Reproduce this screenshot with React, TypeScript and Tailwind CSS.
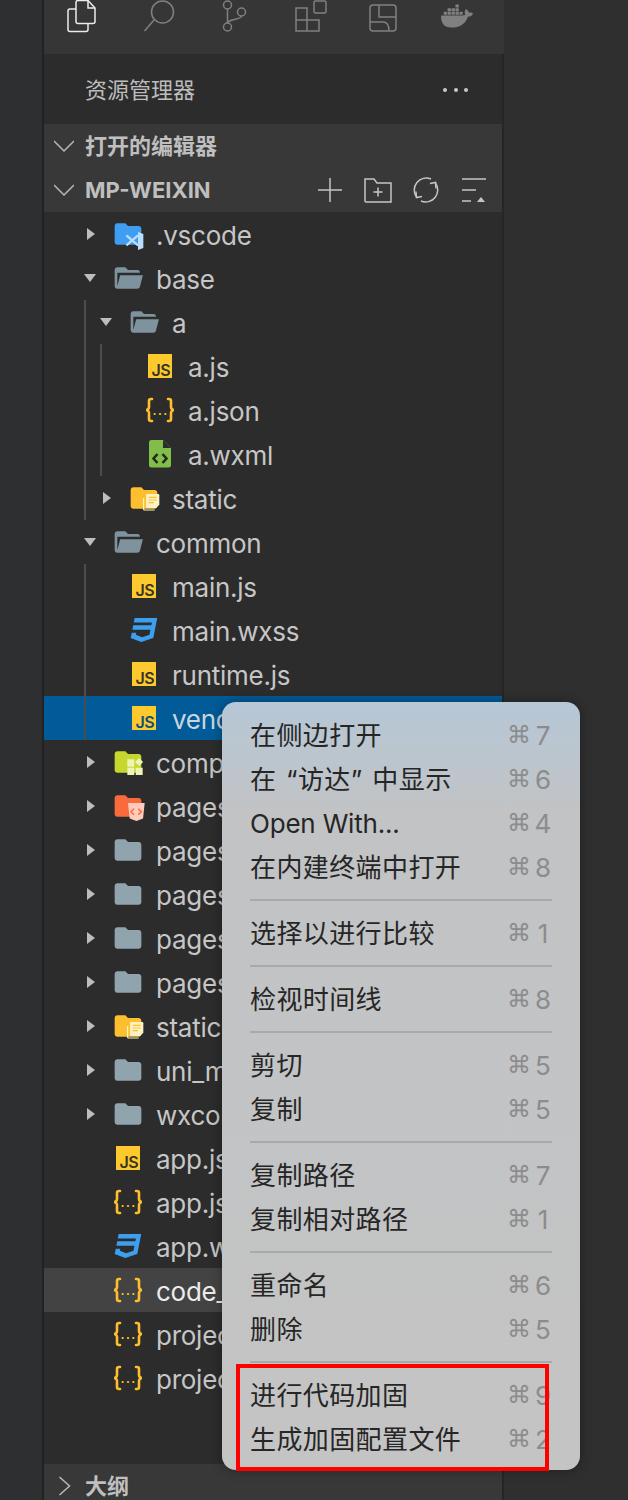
import React from 'react';
import { SiDocker } from 'react-icons/si';

const sans = 'font-["Inter","Noto_Sans_CJK_SC",sans-serif]';

const Folder = ({ color, children }: { color: string; children?: React.ReactNode }) => (
  <svg viewBox="0 0 24 24" className="h-8 w-8 overflow-visible" fill={color}>
    <path d="M10 4H4c-1.1 0-2 .9-2 2v12c0 1.1.9 2 2 2h16c1.1 0 2-.9 2-2V8c0-1.1-.9-2-2-2h-8l-2-2z" />
    {children}
  </svg>
);

const FolderOpen = () => (
  <svg viewBox="0 0 24 24" className="h-8 w-8" fill="#7f939f">
    <path d="M19 20H4c-1.11 0-2-.9-2-2V6c0-1.11.89-2 2-2h6l2 2h7a2 2 0 0 1 2 2H4v10l2.14-8h17.07l-2.28 8.5c-.23.87-1.01 1.5-1.93 1.5z" />
  </svg>
);

const JsIcon = ({ dark = '#3a3426' }: { dark?: string }) => (
  <div
    className={`flex h-6 w-6 items-end justify-end bg-[#fdca2d] pr-[2px] text-[16px] leading-[15px] font-semibold tracking-[-0.6px] ${sans}`}
    style={{ color: dark }}
  >
    JS
  </div>
);

const JsonIcon = () => (
  <svg viewBox="0 0 32 32" className="h-8 w-8" fill="none" stroke="#fdbf2d" strokeWidth="2.600" strokeLinecap="round">
    <path d="M8 5H7a2 2 0 0 0-2 2V13a3 3 0 0 1-3 3 3 3 0 0 1 3 3v6a2 2 0 0 0 2 2h1" />
    <path d="M24 5h1a2 2 0 0 1 2 2V13a3 3 0 0 0 3 3 3 3 0 0 0-3 3v6a2 2 0 0 1-2 2h-1" />
    <path d="M10.500 20h.3M15.900 20h.3M21.200 20h.3" strokeWidth="2" />
  </svg>
);

const CssIcon = () => (
  <svg viewBox="0 0 24 24" className="h-8 w-8" fill="#3d9ff0">
    <path d="M5 3l-.65 3.34h13.59L17.500 8.500H3.920l-.66 3.330h13.590l-.76 3.810-5.480 1.810-4.750-1.810.33-1.640H2.850l-.79 4 7.850 3 9.050-3 1.200-6.030.24-1.210L21.940 3H5z" />
  </svg>
);

const WxmlIcon = () => (
  <svg viewBox="0 0 32 32" className="h-8 w-8">
    <path d="M7.500 2H19l8 8v17a2.500 2.500 0 0 1-2.500 2.500h-17A2.500 2.500 0 0 1 5 27V4.500A2.500 2.500 0 0 1 7.500 2z" fill="#82bd4a" />
    <path d="M19 2l8 8h-8z" fill="#2c2c2c" />
    <path d="M13.500 16l-4 4.500 4 4.500M18.500 16l4 4.500-4 4.500" fill="none" stroke="#1f2a16" strokeWidth="2.500" />
  </svg>
);

const VscodeFolder = () => (
  <Folder color="#3f9df2">
    <path d="M19.500 10.500l4 1.500v10.500l-4 1.500z" fill="#bbdefb" />
    <path d="M10.800 13l8.700 7.500M10.800 20.500l8.700-7.500" fill="none" stroke="#bbdefb" strokeWidth="1.700" />
  </Folder>
);

const ComponentsFolder = () => (
  <Folder color="#c6d82e">
    <path d="M11.500 10h5.200v5.500h-5.200zM11.500 16.300h5.200v5.500h-5.200zM17.800 16.300H23v5.500h-5.200zM20.300 9l3 3-3 3-3-3z" fill="#eef3b8" />
  </Folder>
);

const HtmlFolder = () => (
  <Folder color="#fb6a3d">
    <path d="M12 9.800h12.500l-1.200 11.500-5 1.900-5-1.900z" fill="#ffccbc" />
    <path d="M16.500 14l-2.300 2.300 2.300 2.300M19.700 14l2.300 2.300-2.300 2.300" fill="none" stroke="#fb6a3d" strokeWidth="1.100" />
  </Folder>
);

const StaticFolder = () => (
  <Folder color="#fdbf2d">
    <path d="M14.500 9h8a1 1 0 0 1 1 1v7l-2.500 2.500h-6.500a1 1 0 0 1-1-1V10a1 1 0 0 1 1-1z" fill="#fff3c4" />
    <path d="M15.500 11.500h6M15.500 13.500h6M15.500 15.500h4" stroke="#fdbf2d" strokeWidth="0.900" />
    <path d="M11.700 12v8.200a.8.800 0 0 0 .8.800H20" fill="none" stroke="#fff3c4" strokeWidth="0.900" />
  </Folder>
);

const Twistie = ({ open }: { open: boolean }) => (
  <svg viewBox="0 0 12 12" className="h-3 w-3 shrink-0 overflow-visible" fill="#bdbdbd">
    {open ? <path d="M0 2h12L6 10z" /> : <path d="M3 0l8 6-8 6z" />}
  </svg>
);

type RowProps = {
  depth?: number;
  twistie?: 'open' | 'closed';
  icon: React.ReactNode;
  label: string;
  state?: 'selected' | 'hover';
};

const Row = ({ depth = 0, twistie, icon, label, state }: RowProps) => {
  const pad = ['pl-[40px]', 'pl-[56px]', 'pl-[72px]'][depth];
  const tone =
    state === 'selected'
      ? 'bg-[#005b98] text-[#c9d6df]'
      : state === 'hover'
        ? 'bg-[#434343] text-[#ececec]'
        : 'text-[#c6c6c6]';
  return (
    <div className={`flex h-11 items-center whitespace-nowrap text-[26px] tracking-[-0.25px] ${pad} ${tone}`}>
      <div className="flex w-7 shrink-0 items-center">{twistie && <Twistie open={twistie === 'open'} />}</div>
      <div className="flex w-8 shrink-0 items-center justify-center">{icon}</div>
      <span className="ml-3 max-w-[280px] overflow-hidden pt-[2px]">{label}</span>
    </div>
  );
};

const Guide = ({ depth = 0, children }: { depth?: number; children: React.ReactNode }) => (
  <div className="relative">
    {children}
    <div className={`absolute top-0 bottom-0 w-[2px] bg-[#4c4c4c] ${depth === 0 ? 'left-[40px]' : 'left-[56px]'}`} />
  </div>
);

const Chevron = ({ right }: { right?: boolean }) => (
  <svg viewBox="0 0 20 20" className="h-5 w-5 shrink-0" fill="none" stroke="#b8b8b8" strokeWidth="1.500">
    {right ? <path d="M3.500 1l10 9-10 9" /> : <path d="M0 5l10 10L20 5" />}
  </svg>
);

const SectionHeader = ({ label, children }: { label: string; children?: React.ReactNode }) => (
  <div className="flex h-11 shrink-0 items-center bg-[#383838] pr-[14px] pl-[10px] text-[22px] font-bold text-[#bfbfbf]">
    <Chevron />
    <span className="ml-[11px]">{label}</span>
    {children}
  </div>
);

const HeaderActions = () => (
  <div className="ml-auto flex items-center gap-5">
    <svg viewBox="0 0 28 28" className="h-7 w-7" fill="none" stroke="#c5c5c5" strokeWidth="1.500">
      <path d="M14 2v24M2 14h24" />
    </svg>
    <svg viewBox="0 0 28 28" className="h-7 w-7" fill="none" stroke="#c5c5c5" strokeWidth="1.500">
      <path d="M1 3h9l3 4h14v19H2a1 1 0 0 1-1-1z" />
      <path d="M14 11.500v9M9.500 16h9" />
    </svg>
    <svg viewBox="0 0 28 28" className="h-7 w-7" fill="none" stroke="#c5c5c5" strokeWidth="1.500">
      <path d="M4.500 21A12 12 0 0 1 19 3M23.500 7A12 12 0 0 1 9 25" />
      <path d="M4 15.500l.5 6 5.500-1M24 12.500l-.5-6-5.500 1" />
    </svg>
    <svg viewBox="0 0 28 28" className="h-7 w-7" fill="#c5c5c5" stroke="#c5c5c5">
      <path d="M2 3h24M2 14h14M2 25h9" fill="none" strokeWidth="1.500" />
      <path d="M21 21l4 5h-8z" stroke="none" />
    </svg>
  </div>
);

const ActivityBar = () => (
  <div className="flex h-[54px] shrink-0 bg-[#363636] text-[#808080]">
    <div className="flex h-9 w-[75px] justify-center">
      <svg viewBox="0 0 36 36" className="h-9 w-9" fill="none" stroke="#ececec" strokeWidth="1.500">
        <path d="M14 0.500H24L31 8V21.500a2 2 0 0 1-2 2H14a2 2 0 0 1-2-2V2.500a2 2 0 0 1 2-2z" />
        <path d="M24 0.500V8H31" />
        <path d="M12 9H6a2 2 0 0 0-2 2V29.500a2 2 0 0 0 2 2H22a2 2 0 0 0 2-2V23.500" />
      </svg>
    </div>
    <div className="flex h-9 w-[75px] justify-center">
      <svg viewBox="0 0 36 36" className="h-9 w-9 overflow-visible" fill="none" stroke="currentColor" strokeWidth="1.500">
        <circle cx="23.500" cy="12" r="11" />
        <path d="M15 20L5.500 31" />
      </svg>
    </div>
    <div className="flex h-9 w-[75px] justify-center">
      <svg viewBox="0 0 36 36" className="h-9 w-9 overflow-visible" fill="none" stroke="currentColor" strokeWidth="1.500">
        <circle cx="13.500" cy="5" r="4" />
        <circle cx="13.500" cy="27" r="4" />
        <circle cx="27.500" cy="12" r="4" />
        <path d="M13.500 9v14M27.500 16c0 4-14 3-14 7" />
      </svg>
    </div>
    <div className="flex h-9 w-[75px] justify-center">
      <svg viewBox="0 0 36 36" className="h-9 w-9 overflow-visible" fill="none" stroke="currentColor" strokeWidth="1.500">
        <rect x="25" y="1" width="12" height="12" rx="1.500" />
        <path d="M7 8h11v12h12v11H7zM7 20h11M18 20v11" />
      </svg>
    </div>
    <div className="flex h-9 w-[75px] justify-center">
      <svg viewBox="0 0 36 36" className="h-9 w-9 overflow-visible" fill="none" stroke="currentColor" strokeWidth="1.500">
        <rect x="6" y="5" width="26" height="26" rx="3" />
        <path d="M15 5v12h17M6 22h13c4 0 6 3 6 9" />
      </svg>
    </div>
    <div className="flex h-[32px] w-[75px] items-center justify-center">
      <SiDocker className="h-8 w-8" />
    </div>
  </div>
);

type MenuEntry = [string, string];

const menuGroups: MenuEntry[][] = [
  [
    ['在侧边打开', '7'],
    ['在 “访达” 中显示', '6'],
    ['Open With...', '4'],
    ['在内建终端中打开', '8'],
  ],
  [['选择以进行比较', '1']],
  [['检视时间线', '8']],
  [
    ['剪切', '5'],
    ['复制', '5'],
  ],
  [
    ['复制路径', '7'],
    ['复制相对路径', '1'],
  ],
  [
    ['重命名', '6'],
    ['删除', '5'],
  ],
  [
    ['进行代码加固', '9'],
    ['生成加固配置文件', '2'],
  ],
];

const ContextMenu = () => (
  <div className="absolute top-[702px] left-[222px] w-[358px] rounded-[14px] bg-linear-to-b from-[#b6c7d6] via-[#c1c3c5] via-[14%] to-[#c4c4c4] px-7 pt-[11px] pb-[9px] text-[26px] text-[#262626] shadow-[0_0_12px_rgba(0,0,0,0.35)]">
    {menuGroups.map((group, i) => (
      <div key={i}>
        {i > 0 && (
          <div className="flex h-[22px] items-center">
            <div className="h-[2px] w-full bg-[#a9a9a9]" />
          </div>
        )}
        {group.map(([label, key]) => (
          <div key={label} className="flex h-11 items-center justify-between whitespace-nowrap">
            <span className={label === 'Open With...' ? 'tracking-[-0.2px]' : 'tracking-[0.4px] [word-spacing:2px]'}>
              {label}
            </span>
            <span className="flex items-center gap-[3px] text-[#8c8c8c]">
              <span className='font-["DejaVu_Sans"] text-[24px]'>⌘</span>
              <span className="w-[18px] text-center">{key}</span>
            </span>
          </div>
        ))}
      </div>
    ))}
  </div>
);

const App: React.FC = () => {
  return (
    <div className={`relative flex h-[1500px] w-[628px] overflow-hidden bg-[#2f2f2f] ${sans}`}>
      <div className="w-[44px] shrink-0 border-r-2 border-[#222222] bg-[#2d2f30]" />
      <div className="flex w-[460px] shrink-0 flex-col">
        <ActivityBar />
        <div className="flex w-[460px] min-h-0 flex-1 flex-col border-r-2 border-[#262626] bg-[#2c2c2c]">
          <div className="flex h-[70px] shrink-0 items-center justify-between pt-[2px] pr-[34px] pl-[41px] text-[22px] text-[#bdbdbd]">
            <span>资源管理器</span>
            <span className="flex gap-[6.500px]">
              <span className="h-1 w-1 rounded-full bg-[#c8c8c8]" />
              <span className="h-1 w-1 rounded-full bg-[#c8c8c8]" />
              <span className="h-1 w-1 rounded-full bg-[#c8c8c8]" />
            </span>
          </div>
          <SectionHeader label="打开的编辑器" />
          <SectionHeader label="MP-WEIXIN">
            <HeaderActions />
          </SectionHeader>
          <div className="h-[1252px] shrink-0">
            <Row twistie="closed" icon={<VscodeFolder />} label=".vscode" />
            <Row twistie="open" icon={<FolderOpen />} label="base" />
            <Guide>
              <Row depth={1} twistie="open" icon={<FolderOpen />} label="a" />
              <Guide depth={1}>
                <Row depth={2} icon={<JsIcon />} label="a.js" />
                <Row depth={2} icon={<JsonIcon />} label="a.json" />
                <Row depth={2} icon={<WxmlIcon />} label="a.wxml" />
              </Guide>
              <Row depth={1} twistie="closed" icon={<StaticFolder />} label="static" />
            </Guide>
            <Row twistie="open" icon={<FolderOpen />} label="common" />
            <Guide>
              <Row depth={1} icon={<JsIcon />} label="main.js" />
              <Row depth={1} icon={<CssIcon />} label="main.wxss" />
              <Row depth={1} icon={<JsIcon />} label="runtime.js" />
              <Row depth={1} icon={<JsIcon dark="#0f4f7d" />} label="vend" state="selected" />
            </Guide>
            <Row twistie="closed" icon={<ComponentsFolder />} label="comp" />
            <Row twistie="closed" icon={<HtmlFolder />} label="pages" />
            <Row twistie="closed" icon={<Folder color="#90a4ae" />} label="pages" />
            <Row twistie="closed" icon={<Folder color="#90a4ae" />} label="pages" />
            <Row twistie="closed" icon={<Folder color="#90a4ae" />} label="pages" />
            <Row twistie="closed" icon={<Folder color="#90a4ae" />} label="pages" />
            <Row twistie="closed" icon={<StaticFolder />} label="static" />
            <Row twistie="closed" icon={<Folder color="#90a4ae" />} label="uni_m" />
            <Row twistie="closed" icon={<Folder color="#90a4ae" />} label="wxcor" />
            <Row icon={<JsIcon />} label="app.js" />
            <Row icon={<JsonIcon />} label="app.js" />
            <Row icon={<CssIcon />} label="app.w" />
            <Row icon={<JsonIcon />} label="code_" state="hover" />
            <Row icon={<JsonIcon />} label="projec" />
            <Row icon={<JsonIcon />} label="projec" />
          </div>
          <div className="flex h-11 shrink-0 items-center bg-[#383838] pl-[12px] text-[22px] font-bold text-[#bfbfbf]">
            <Chevron right />
            <span className="ml-[9px]">大纲</span>
          </div>
        </div>
      </div>
      <ContextMenu />
      <div className="absolute top-[1364px] left-[236px] h-[107px] w-[313px] border-4 border-[#ff0000]" />
    </div>
  );
};

export default App;
